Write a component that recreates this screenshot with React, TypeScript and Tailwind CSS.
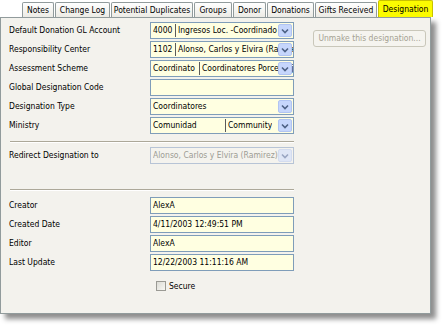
import React from 'react';

const tabs = [
    { name: 'Notes', w: 32 },
    { name: 'Change Log', w: 55 },
    { name: 'Potential Duplicates', w: 82 },
    { name: 'Groups', w: 38 },
    { name: 'Donor', w: 33 },
    { name: 'Donations', w: 47 },
    { name: 'Gifts Received', w: 62 },
];

const Arrow = ({ disabled }: { disabled?: boolean }) => (
    <div
        className={`absolute right-[1px] top-[1px] bottom-[1px] w-[14px] flex items-center justify-center rounded-[2px] border ${
            disabled ? 'bg-[#dfe6f6] border-[#d3dcef]' : 'bg-[#c6d6fc] border-[#b1c4f2]'
        }`}
    >
        <svg width="8" height="6" viewBox="0 0 8 6">
            <path
                d="M1 1.5 L4 4.5 L7 1.5"
                fill="none"
                stroke={disabled ? '#9aa6c2' : '#4d6185'}
                strokeWidth="1.6"
            />
        </svg>
    </div>
);

const Field = ({
    cols,
    combo,
    disabled,
}: {
    cols?: { text: string; w?: number }[];
    combo?: boolean;
    disabled?: boolean;
}) => (
    <div
        className={`relative h-[17px] w-[144px] border ${
            disabled ? 'bg-[#f4f3ee] border-[#b7c4d6] text-[#9c9c94]' : 'bg-[#ffffe1] border-[#7f9db9] text-black'
        } flex items-center pl-[2px] overflow-hidden whitespace-nowrap`}
    >
        {cols?.map((c, i) => (
            <span
                key={i}
                className={`shrink-0 overflow-hidden leading-[13px] ${i > 0 ? 'border-l border-[#5a5a5a] pl-[2px]' : ''}`}
                style={c.w ? { width: c.w } : undefined}
            >
                {c.text}
            </span>
        ))}
        {combo && <Arrow disabled={disabled} />}
    </div>
);

const Row = ({ label, children }: { label: string; children: React.ReactNode }) => (
    <div className="flex items-center h-[17px]">
        <div className="w-[141px] shrink-0 whitespace-nowrap">{label}</div>
        {children}
    </div>
);

const Separator = ({ className }: { className: string }) => (
    <div className={`${className} w-[284px] ml-[1px] border-t border-[#aca899] border-b border-b-white`} />
);

export default function App() {
    return (
        <div className="w-[444px] h-[331px] bg-white overflow-hidden text-[8.5px] text-black font-['DejaVu_Sans_Condensed','Liberation_Sans',Arial,sans-serif]">
            {/* Tabs */}
            <div className="flex items-end h-[17px] pl-[22px]">
                {tabs.map((t) => (
                    <div
                        key={t.name}
                        className="h-[15px] mr-[1px] pt-[1px] bg-gradient-to-b from-white to-[#ecebe5] border border-b-0 border-[#919b9c] rounded-t-[2px] flex items-center justify-center shrink-0 whitespace-nowrap"
                        style={{ width: t.w }}
                    >
                        {t.name}
                    </div>
                ))}
                <div className="h-[17px] w-[55px] bg-[#fbfb00] border border-b-0 border-[#c9c200] rounded-t-[2px] flex items-center justify-center shrink-0 whitespace-nowrap">
                    Designation
                </div>
            </div>

            {/* Panel */}
            <div className="w-[431px] h-[297px] bg-[#f3f2ed] border border-[#919b9c] shadow-[5px_5px_5px_rgba(0,0,0,0.45)] flex">
                <div className="pl-[8px] pt-[4px] flex flex-col">
                    <div className="flex flex-col gap-[2px]">
                        <Row label="Default Donation GL Account">
                            <Field combo cols={[{ text: '4000', w: 22 }, { text: 'Ingresos Loc. -Coordinado' }]} />
                        </Row>
                        <Row label="Responsibility Center">
                            <Field combo cols={[{ text: '1102', w: 22 }, { text: 'Alonso, Carlos y Elvira (Ramirez)' }]} />
                        </Row>
                        <Row label="Assessment Scheme">
                            <Field combo cols={[{ text: 'Coordinato', w: 46 }, { text: 'Coordinatores Porcentaje' }]} />
                        </Row>
                        <Row label="Global Designation Code">
                            <Field />
                        </Row>
                        <Row label="Designation Type">
                            <Field combo cols={[{ text: 'Coordinatores' }]} />
                        </Row>
                        <Row label="Ministry">
                            <Field combo cols={[{ text: 'Comunidad', w: 72 }, { text: 'Community' }]} />
                        </Row>
                    </div>

                    <Separator className="mt-[7px]" />

                    <div className="mt-[4px]">
                        <Row label="Redirect Designation to">
                            <Field combo disabled cols={[{ text: 'Alonso, Carlos y Elvira (Ramirez)' }]} />
                        </Row>
                    </div>

                    <Separator className="mt-[25px]" />

                    <div className="mt-[6px] flex flex-col gap-[2px]">
                        <Row label="Creator">
                            <Field cols={[{ text: 'AlexA' }]} />
                        </Row>
                        <Row label="Created Date">
                            <Field cols={[{ text: '4/11/2003 12:49:51 PM' }]} />
                        </Row>
                        <Row label="Editor">
                            <Field cols={[{ text: 'AlexA' }]} />
                        </Row>
                        <Row label="Last Update">
                            <Field cols={[{ text: '12/22/2003 11:11:16 AM' }]} />
                        </Row>
                    </div>

                    <label className="mt-[9px] ml-[147px] flex items-center gap-[3px]">
                        <span className="w-[10px] h-[10px] border border-[#9a9a94] bg-gradient-to-br from-[#dcdcd6] to-[#f7f7f3]" />
                        Secure
                    </label>
                </div>

                <div className="pl-[19px] pt-[12px]">
                    <button className="w-[113px] h-[17px] border border-[#c9c7ba] rounded-[3px] bg-[#f5f4ef] text-[#a5a293] flex items-center justify-center whitespace-nowrap">
                        Unmake this designation...
                    </button>
                </div>
            </div>
        </div>
    );
}
